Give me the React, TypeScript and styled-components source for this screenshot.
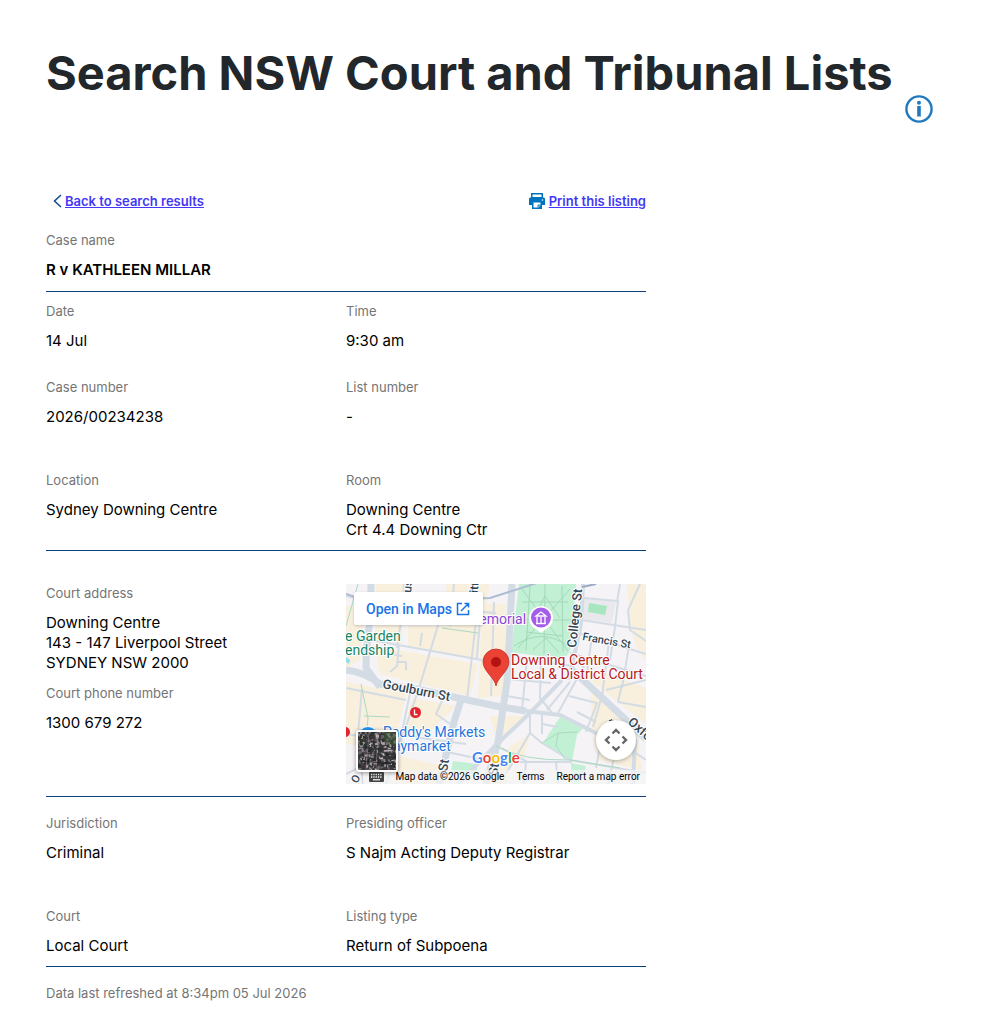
import React from "react";
import styled, { createGlobalStyle } from "styled-components";

const GlobalStyle = createGlobalStyle`
  *, *::before, *::after { box-sizing: border-box; }
  body {
    margin: 0;
    background: #fff;
    color: #000;
    font-family: Inter, "Liberation Sans", sans-serif;
    font-size: 15px;
    line-height: 20px;
  }
`;

const Page = styled.main`
  padding: 43px 46px 0;
`;

const Header = styled.header`
  display: flex;
  align-items: flex-start;
  gap: 11px;
  margin-bottom: 67px;
`;

const Title = styled.h1`
  margin: 0;
  color: #22272b;
  font-size: 47px;
  font-weight: 700;
  line-height: 60px;
  white-space: nowrap;
`;

const IconButton = styled.button`
  display: flex;
  margin: 51px 0 0;
  padding: 0;
  border: 0;
  background: none;
  cursor: pointer;
`;

const Listing = styled.div`
  max-width: 600px;
`;

const Toolbar = styled.nav`
  display: flex;
  justify-content: space-between;
  padding-left: 7px;
  margin-bottom: 19px;
`;

const ToolLink = styled.a<{ $gap: number }>`
  display: flex;
  align-items: center;
  gap: ${(p) => p.$gap}px;
  color: #4338f5;
  font-size: 13px;
  font-weight: 600;
  text-decoration: none;
  span { text-decoration: underline; }
`;

const Section = styled.dl<{ $top?: number; $bottom?: number; $gap?: number }>`
  display: grid;
  grid-template-columns: 1fr 1fr;
  row-gap: ${(p) => p.$gap ?? 43}px;
  margin: 0;
  padding: ${(p) => p.$top ?? 0}px 0 ${(p) => p.$bottom ?? 10}px;
  border-bottom: 1px solid #0b3f7c;
`;

const Column = styled.div`
  display: flex;
  flex-direction: column;
  gap: 10px;
`;

const Stack = styled.div<{ $gap: number }>`
  display: grid;
  grid-column: 1 / -1;
  grid-template-columns: 1fr 1fr;
  row-gap: ${(p) => p.$gap}px;
`;

const Label = styled.dt`
  color: #757575;
  font-size: 13px;
`;

const Value = styled.dd<{ $strong?: boolean }>`
  margin: 10px 0 0;
  font-weight: ${(p) => (p.$strong ? 600 : 400)};
  white-space: pre-line;
`;

const Refreshed = styled.p`
  margin: 16px 0 0;
  color: #757575;
  font-size: 13px;
`;

const MapFrame = styled.div`
  position: relative;
  height: 200px;
  margin-top: 1px;
  overflow: hidden;
  background: #f5f3f5;
  font-family: Roboto, "Liberation Sans", sans-serif;
`;

const MapDrawing = styled.svg`
  display: block;
  width: 100%;
  height: 100%;
`;

const OpenLink = styled.a`
  position: absolute;
  top: 8px;
  left: 8px;
  display: flex;
  align-items: center;
  gap: 4px;
  height: 33px;
  padding: 0 13px 0 12px;
  border-radius: 2px;
  background: #fff;
  box-shadow: 0 1px 3px rgba(0, 0, 0, 0.2);
  color: #1a73e8;
  font-size: 14px;
  font-weight: 500;
  text-decoration: none;
`;

const CameraButton = styled.button`
  position: absolute;
  right: 10px;
  bottom: 24px;
  display: grid;
  place-items: center;
  width: 40px;
  height: 40px;
  padding: 0;
  border: 0;
  border-radius: 50%;
  background: #fff;
  box-shadow: 0 1px 4px rgba(0, 0, 0, 0.3);
`;

const SatelliteButton = styled.button`
  position: absolute;
  bottom: 12px;
  left: 10px;
  width: 42px;
  height: 42px;
  padding: 0;
  border: 2px solid #fff;
  border-radius: 3px;
  background: #46474a;
  box-shadow: 0 1px 4px rgba(0, 0, 0, 0.4);
  overflow: hidden;
  svg { display: block; }
`;

const GoogleMark = styled.a`
  position: absolute;
  left: 126px;
  bottom: 17px;
  font-family: Lato, sans-serif;
  font-size: 15px;
  line-height: 20px;
  text-decoration: none;
  text-shadow: 0 0 1px #fff, 1px 0 1px #fff, -1px 0 1px #fff, 0 1px 1px #fff, 0 -1px 1px #fff;
`;

const Letter = styled.span<{ $color: string }>`
  color: ${(p) => p.$color};
  font-weight: 700;
`;

const Attribution = styled.div`
  position: absolute;
  right: 0;
  bottom: 0;
  display: flex;
  align-items: center;
  gap: 12px;
  height: 14px;
  padding: 0 6px;
  background: rgba(245, 245, 245, 0.7);
  color: #000;
  font-size: 10px;
  line-height: 14px;
  white-space: nowrap;
  a { color: inherit; text-decoration: none; }
`;

const KeyboardButton = styled.button`
  display: flex;
  padding: 0;
  border: 0;
  background: none;
`;

const park = "#c1f0d4";
const beige = "#f8efdd";

const beigeBlocks = [
  "0,22 18,24 14,76 0,84",
  "30,0 58,0 56,60 29,54",
  "62,42 134,42 132,75 62,62",
  "28,62 132,80 124,112 34,90",
  "100,0 144,0 132,60 104,56",
  "136,20 160,20 158,112 132,114",
  "0,98 60,109 48,166 0,160",
  "66,114 110,122 80,152 58,148",
  "174,0 188,0 173,4",
  "281,0 300,0 300,78 290,62 284,40",
  "144,132 180,132 151,158",
  "162,164 184,150 178,174 168,174",
  "146,168 164,178 160,200 142,200",
  "245,104 290,146 296,186 252,176 246,146",
  "242,84 300,104 300,140 244,96",
  "54,172 96,182 90,200 46,200",
];

const majorRoads = [
  "M25 0 L24 36 Q20 62 20 84 L34 103",
  "M0 86 Q18 88 34 100 L70 105 L150 122 L180 127",
  "M166 0 L161 98 L152 158 L140 200",
  "M115 116 L108 138 L93 200",
  "M300 155 L277 133 L224 84",
];

const mediumRoads = [
  "M237 0 L235 40 L223 96",
  "M180 127 L214 131 L256 152",
  "M216 96 L184 129 L151 160 L112 200",
  "M289 155 L287 200",
];

const minorRoads = [
  "M0 12 L30 19 L150 29",
  "M58 0 L56 30 L51 64",
  "M108 0 L104 42",
  "M30 57 L136 76 L158 79",
  "M93 38 L74 101 L52 166 L40 200",
  "M130 36 L126 72 L121 115",
  "M136 10 L131 74",
  "M148 18 L145 112",
  "M53 60 L51 82 L44 88 M51 78 L60 78 L60 86",
  "M35 68 L56 72 M76 49 L74 62",
  "M0 104 L60 116",
  "M64 109 L54 158",
  "M0 150 L54 158 L148 178 L226 178",
  "M56 150 L74 154 L120 160",
  "M96 117 L90 130 L104 140",
  "M16 105 L12 150 L17 200",
  "M0 190 L20 180",
  "M229 35 L300 46",
  "M226 47 L300 70",
  "M238 14 L272 17 L269 43 L264 76",
  "M274 0 L271 18",
  "M294 0 L282 26 L284 46 L300 57",
  "M224 69 L300 92",
  "M246 52 L240 96 M263 58 L256 112 M283 62 L276 104",
  "M171 74 L226 82",
  "M181 76 L176 126 M195 78 L194 114 L207 130",
  "M161 95 L205 99 M161 112 L184 116",
  "M238 82 L212 129",
  "M224 98 L201 126",
  "M223 112 L251 119 L240 148 M231 128 L250 138",
  "M276 100 L272 118 L300 123",
  "M257 108 L247 143 M300 96 L260 106",
  "M184 129 L184 149 L196 159 L224 176 L300 189",
  "M184 149 L160 190 M196 140 L212 143 M196 129 L196 150",
  "M155 164 L180 177 L178 200",
  "M210 178 L212 200",
  "M256 150 L250 184 M268 174 L262 200",
  "M270 156 L300 176",
];

const footPaths =
  "M176 5 L222 67 M224 5 L172 64 M199 0 L198 70 M172 36 L226 36 M184 2 L180 66 M216 2 L217 68 M168 62 Q196 43 222 62 M176 18 L222 18 M180 48 L217 52 M199 12 L214 34 M187 35 L199 12 M200 54 L187 66 M200 54 L213 69";
const greenPaths =
  "M12 0 L0 42 M15 100 L22 134 L18 178 M18 132 L44 133 M96 44 L132 49 M196 159 L212 149 L231 148 M212 149 L210 162 L219 175 M150 162 Q176 177 224 176 L274 184";

const streetLabels = [
  { text: "Goulburn St", x: 36, y: 104, turn: 11, size: 13 },
  { text: "Francis St", x: 236, y: 56, turn: 10, size: 11 },
  { text: "College St", x: 230, y: 64, turn: -84, size: 13 },
  { text: "Oxford", x: 281, y: 139, turn: 42, size: 13 },
  { text: "St", x: 101, y: 188, turn: -80, size: 13 },
  { text: "St", x: 151, y: 192, turn: -80, size: 13 },
  { text: "Pitt", x: 131, y: 17, turn: -84, size: 12 },
  { text: "us", x: 65, y: 9, turn: -84, size: 12 },
  { text: "t", x: 271, y: 140, turn: -80, size: 13 },
  { text: "O", x: 11, y: 200, turn: -60, size: 11 },
];

const placeLabels = [
  { text: "e Garden", x: -1, y: 57, color: "#168563" },
  { text: "endship", x: -1, y: 71, color: "#168563" },
  { text: "Memorial", x: 121, y: 40, color: "#8a45d8" },
  { text: "Paddy's Markets", x: 37, y: 153, color: "#2675db" },
  { text: "Haymarket", x: 37, y: 167, color: "#2675db" },
  { text: "Downing Centre", x: 165, y: 81, color: "#b3201d" },
  { text: "Local & District Court", x: 165, y: 95, color: "#b3201d" },
];

const roofColors = ["#222426", "#8d878b", "#2b2f30", "#a89da1", "#4a3c40", "#29352b", "#66606a", "#c2b8bb"];

function Roofs() {
  const roofs = [];
  let seed = 41;
  const next = (range: number) => {
    seed = (seed * 16807) % 2147483647;
    return Math.floor((seed / 2147483647) * range);
  };
  for (let i = 0; i < 520; i += 1) {
    roofs.push(
      <rect key={i} x={next(44) - 3} y={next(44) - 3} width={1 + next(3)} height={1 + next(3)} fill={roofColors[next(8)]} />
    );
  }
  return (
    <svg width="38" height="38" viewBox="0 0 38 38" aria-hidden="true">
      <rect width="38" height="38" fill="#343638" />
      <g transform="rotate(-8 19 19)">{roofs}</g>
      <path d="M25 0H38V14L27 11Z" fill="#3a5335" opacity=".6" />
      <path d="M11 0L8 38M20 0L18 38" stroke="#9b8790" strokeWidth="1" fill="none" opacity=".6" />
      <path d="M0 15L38 18M0 29L38 32" stroke="#202224" strokeWidth="1" fill="none" opacity=".6" />
    </svg>
  );
}

function CourtMap() {
  return (
    <MapFrame>
      <MapDrawing viewBox="0 0 300 200" preserveAspectRatio="xMidYMid slice" role="img" aria-label="Map of Downing Centre">
        <rect width="300" height="200" fill="#f5f3f5" />
        {beigeBlocks.map((points) => (
          <polygon key={points} points={points} fill={beige} />
        ))}
        <g fill={park}>
          <path d="M173 0H230L226 60Q223 74 214 75L165 68Z" />
          <path d="M214 133L237 144L231 151L226 177L197 159Z" />
          <path d="M225 179L240 182L234 200H226Z" />
          <path d="M107 177L131 180V191L105 188Z" />
        </g>
        <path d="M237 14L270 18L266 39L235 35Z" fill="#e9e9ed" />
        <path d="M243 19L261 22L259 31L242 28Z" fill="#a8e6c0" />
        <path d={footPaths} fill="none" stroke="#a3d9b9" />
        <g fill="none" stroke="#d3dce4" strokeLinejoin="round">
          {minorRoads.map((d) => <path key={d} d={d} strokeWidth="2" />)}
          {mediumRoads.map((d) => <path key={d} d={d} strokeWidth="4" />)}
          {majorRoads.map((d) => <path key={d} d={d} strokeWidth="7" />)}
        </g>
        <path d={greenPaths} fill="none" stroke="#acd9c2" strokeWidth="1" />
        <path d="M0 10L24 18L144 14L194 -2" fill="none" stroke="#afbdd3" strokeWidth="2" />
        <path d="M236 3L250 0" stroke="#9caac6" strokeWidth="2" />
        <path d="M0 73L4 76L3 80L0 78Z" fill="#91def1" />

        <g fill="#344653" stroke="#fff" strokeWidth="2" paintOrder="stroke" fontWeight="500">
          {streetLabels.map((s, i) => (
            <text key={i} x={s.x} y={s.y} fontSize={s.size} transform={`rotate(${s.turn} ${s.x} ${s.y})`}>{s.text}</text>
          ))}
        </g>
        <g stroke="#fff" strokeWidth="2" paintOrder="stroke" fontSize="14">
          {placeLabels.map((p) => <text key={p.text} x={p.x} y={p.y} fill={p.color}>{p.text}</text>)}
        </g>

        <circle cx="195" cy="34" r="12" fill="#fff" />
        <path d="M195 49L186 42H204Z" fill="#fff" />
        <circle cx="195" cy="33.500" r="10" fill="#a45de8" />
        <path d="M190 32L195 28L200 32ZM191 33V39M195 33V39M199 33V39M190 39.500H200" fill="none" stroke="#fff" strokeWidth="1.300" />
        <g fill="#e3232e">
          <circle cx="69.500" cy="128.500" r="5.500" />
          <circle cx="-1" cy="148" r="5" />
        </g>
        <path d="M68.500 125.500V130.500H71.500" fill="none" stroke="#fff" strokeWidth="1.300" />
        <circle cx="22" cy="152" r="9.500" fill="#2196f3" stroke="#fff" />
        <path d="M150 102C149 94 137 87 137 78A13 13 0 1 1 163 78C163 87 151 94 150 102Z" fill="#ea4335" stroke="#c5221f" strokeWidth=".7" />
        <circle cx="150" cy="78" r="5" fill="#b31412" />
      </MapDrawing>

      <OpenLink href="#map">
        Open in Maps
        <svg width="14" height="14" viewBox="0 0 14 14" fill="none" stroke="currentColor" strokeWidth="1.500" aria-hidden="true">
          <path d="M6 1.500H1.500V12.500H12.500V8M8.500 1.500H12.500V5.500M12.500 1.500L5 9" />
        </svg>
      </OpenLink>
      <GoogleMark href="#google" aria-label="Google">
        {["#4285f4", "#ea4335", "#fbbc04", "#4285f4", "#34a853", "#ea4335"].map((color, i) => (
          <Letter key={i} $color={color}>{"Google"[i]}</Letter>
        ))}
      </GoogleMark>
      <Attribution>
        <KeyboardButton type="button" aria-label="Keyboard shortcuts">
          <svg width="15" height="10" viewBox="0 0 15 10" aria-hidden="true">
            <rect width="15" height="10" rx="1" fill="#444" />
            <path d="M2 2.500H13M2 5H13" stroke="#fff" strokeWidth="1.300" strokeDasharray="1.300 1" />
            <path d="M4 7.800H11" stroke="#fff" strokeWidth="1.200" />
          </svg>
        </KeyboardButton>
        <span>Map data ©2026 Google</span>
        <a href="#terms">Terms</a>
        <a href="#report">Report a map error</a>
      </Attribution>
      <SatelliteButton type="button" aria-label="Show satellite imagery">
        <Roofs />
      </SatelliteButton>
      <CameraButton type="button" aria-label="Map camera controls">
        <svg width="24" height="24" viewBox="0 0 24 24" fill="none" stroke="#666" strokeWidth="2.400" aria-hidden="true">
          <path d="M8.500 5.500L12 2L15.500 5.500M8.500 18.500L12 22L15.500 18.500M5.500 8.500L2 12L5.500 15.500M18.500 8.500L22 12L18.500 15.500" />
        </svg>
      </CameraButton>
    </MapFrame>
  );
}

function Field({ label, value, strong }: { label: string; value: string; strong?: boolean }) {
  return (
    <div>
      <Label>{label}</Label>
      <Value $strong={strong}>{value}</Value>
    </div>
  );
}

export default function App() {
  return (
    <>
      <GlobalStyle />
      <Page>
        <Header>
          <Title>Search NSW Court and Tribunal Lists</Title>
          <IconButton type="button" aria-label="About court lists">
            <svg width="30" height="30" viewBox="0 0 30 30" aria-hidden="true">
              <circle cx="15" cy="15" r="12.600" fill="none" stroke="#2079bf" strokeWidth="2.400" />
              <circle cx="15" cy="8.800" r="2" fill="#2079bf" />
              <path d="M13.200 12H16.800V22.500H13.200Z" fill="#2079bf" />
            </svg>
          </IconButton>
        </Header>
        <Listing>
          <Toolbar>
            <ToolLink href="#results" $gap={3}>
              <svg width="9" height="14" viewBox="0 0 9 14" fill="none" stroke="#0b4a8b" strokeWidth="1.500" aria-hidden="true">
                <path d="M8 1L1.500 7L8 13" />
              </svg>
              <span>Back to search results</span>
            </ToolLink>
            <ToolLink href="#print" $gap={4}>
              <svg width="16" height="16" viewBox="0 0 16 16" aria-hidden="true">
                <path d="M2 0H14V5H2Z" fill="#0074bd" />
                <path d="M3.500 1.500H12.500V4H3.500Z" fill="#fff" />
                <path d="M1 4.500H15L16 5.500V12H13V16H3V12H0V5.500Z" fill="#0074bd" />
                <path d="M4.500 9.500H11.500V12L9.500 14.500H4.500Z" fill="#fff" />
                <path d="M9 14.500V12H11.500" fill="none" stroke="#0074bd" />
                <circle cx="13.500" cy="7" r=".8" fill="#fff" />
              </svg>
              <span>Print this listing</span>
            </ToolLink>
          </Toolbar>

          <Section $bottom={11}>
            <Field label="Case name" value="R v KATHLEEN MILLAR" strong />
          </Section>
          <Section $top={9}>
            <Stack $gap={26}>
              <Field label="Date" value="14 Jul" />
              <Field label="Time" value="9:30 am" />
              <Field label="Case number" value="2026/00234238" />
              <Field label="List number" value="-" />
            </Stack>
            <Field label="Location" value="Sydney Downing Centre" />
            <Field label="Room" value={"Downing Centre\nCrt 4.4 Downing Ctr"} />
          </Section>
          <Section $top={32} $bottom={12}>
            <Column>
              <Field label="Court address" value={"Downing Centre\n143 - 147 Liverpool Street\nSYDNEY NSW 2000"} />
              <Field label="Court phone number" value="1300 679 272" />
            </Column>
            <CourtMap />
          </Section>
          <Section $top={16}>
            <Field label="Jurisdiction" value="Criminal" />
            <Field label="Presiding officer" value="S Najm Acting Deputy Registrar" />
            <Field label="Court" value="Local Court" />
            <Field label="Listing type" value="Return of Subpoena" />
          </Section>
          <Refreshed>Data last refreshed at 8:34pm 05 Jul 2026</Refreshed>
        </Listing>
      </Page>
    </>
  );
}
